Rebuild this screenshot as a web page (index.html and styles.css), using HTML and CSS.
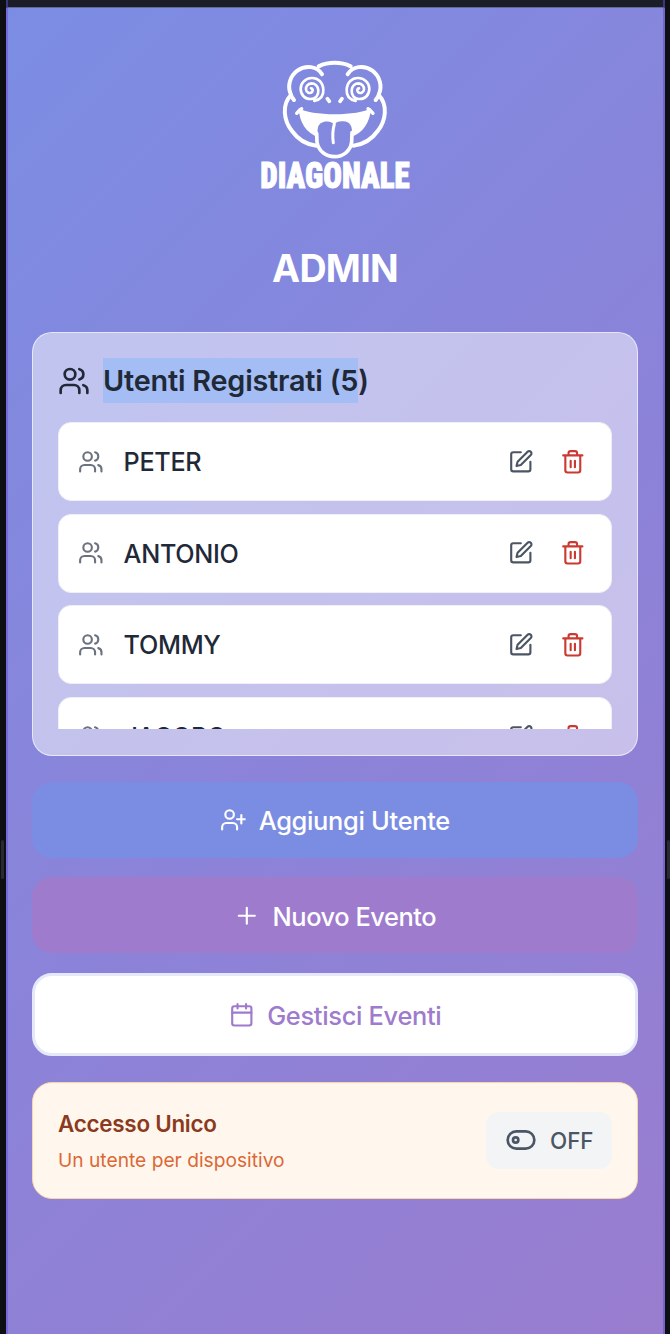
FILE: index.html
```
<!DOCTYPE html>
<html lang="it">
<head>
<meta charset="utf-8">
<title>Admin</title>
<link rel="stylesheet" href="styles.css">
</head>
<body>
<svg class="symbols" aria-hidden="true">
  <symbol id="users" viewBox="0 0 24 24"><path d="M16 21v-2a4 4 0 0 0-4-4H6a4 4 0 0 0-4 4v2"/><circle cx="9" cy="7" r="4"/><path d="M22 21v-2a4 4 0 0 0-3-3.87M16 3.13a4 4 0 0 1 0 7.75"/></symbol>
  <symbol id="edit" viewBox="0 0 24 24"><path d="M12 3H5a2 2 0 0 0-2 2v14a2 2 0 0 0 2 2h14a2 2 0 0 0 2-2v-7"/><path d="M18.375 2.625a2.121 2.121 0 1 1 3 3L12 15l-4 1 1-4Z"/></symbol>
  <symbol id="trash" viewBox="0 0 24 24"><path d="M3 6h18M19 6v14a2 2 0 0 1-2 2H7a2 2 0 0 1-2-2V6M8 6V4a2 2 0 0 1 2-2h4a2 2 0 0 1 2 2v2M10 11v6M14 11v6"/></symbol>
  <symbol id="user-plus" viewBox="0 0 24 24"><path d="M16 21v-2a4 4 0 0 0-4-4H6a4 4 0 0 0-4 4v2"/><circle cx="9" cy="7" r="4"/><path d="M20 7.5v8M24 11.5h-8"/></symbol>
  <symbol id="plus" viewBox="0 0 24 24"><path d="M4.500 12h15M12 4.500v15"/></symbol>
  <symbol id="calendar" viewBox="0 0 24 24"><path d="M8 2v4M16 2v4M3 10h18"/><rect x="3" y="4" width="18" height="18" rx="2"/></symbol>
  <symbol id="toggle" viewBox="0 0 24 24"><rect x="2" y="5.5" width="20" height="13" rx="6.5"/><circle cx="8" cy="12" r="2"/></symbol>
</svg>
<div class="window">
  <div class="topbar"></div>
  <main class="screen">
    <svg class="logo" viewBox="0 0 510 450">
      <g fill="none" stroke="#fff" stroke-width="12" stroke-linecap="round" stroke-linejoin="round">
        <path d="M206 49C235 35 273 35 302 49"/>
        <path d="M216 73C202 48 167 44 142 62C119 79 112 108 122 132C124 140 128 146 132 150"/>
        <path d="M293 73C307 48 342 44 367 62C390 79 397 108 387 132C385 140 381 146 377 150"/>
        <path d="M122 136C96 164 100 210 126 243C145 270 172 284 199 287"/>
        <path d="M387 136C413 164 409 210 383 243C364 270 337 284 310 287"/>
        <path d="M200 250L201 276C206 306 230 320 254 320C279 320 301 304 305 276L306 248" stroke-width="11"/>
        <path id="spiral" stroke-width="8" d="M193 153C213 149 221 136 220 119C219 97 204 83 185 84C166 85 152 99 152 116C152 135 165 147 181 147C197 147 206 136 205 121C204 108 195 100 184 100C174 101 167 109 168 118C169 128 180 132 186 126C190 121 188 115 183 115"/>
        <use href="#spiral" transform="translate(510 0) scale(-1 1)"/>
        <path stroke-width="10" d="M140 190Q147 182 155 176M369 190Q362 182 354 176"/>
        <path d="M232 146L238 154M276 146L270 154" stroke-width="11"/>
      </g>
      <path fill="#fff" d="M146 174C180 199 328 199 363 174C361 217 337 250 305 260C310 227 299 215 280 214C265 213 256 218 253 225C248 212 213 208 205 229C202 237 202 248 204 261C169 249 148 218 146 174Z"/>
      <path d="M253 222C248 240 247 258 250 278" fill="none" stroke="#fff" stroke-width="9" stroke-linecap="round"/>
      <text class="logo-text" x="31" y="413" textLength="448" lengthAdjust="spacingAndGlyphs">DIAGONALE</text>
    </svg>
    <h1>ADMIN</h1>
    <section class="users">
      <h2><svg class="icon i-lg"><use href="#users"/></svg><span class="t-title"><span class="selected">Utenti Registrati (5</span>)</span></h2>
      <div class="list">
        <div class="row"><svg class="icon muted"><use href="#users"/></svg><span class="name">PETER</span><svg class="icon edit"><use href="#edit"/></svg><svg class="icon trash"><use href="#trash"/></svg></div>
        <div class="row"><svg class="icon muted"><use href="#users"/></svg><span class="name">ANTONIO</span><svg class="icon edit"><use href="#edit"/></svg><svg class="icon trash"><use href="#trash"/></svg></div>
        <div class="row"><svg class="icon muted"><use href="#users"/></svg><span class="name">TOMMY</span><svg class="icon edit"><use href="#edit"/></svg><svg class="icon trash"><use href="#trash"/></svg></div>
        <div class="row"><svg class="icon muted"><use href="#users"/></svg><span class="name">JACOPO</span><svg class="icon edit"><use href="#edit"/></svg><svg class="icon trash"><use href="#trash"/></svg></div>
      </div>
    </section>
    <div class="actions">
      <div class="btn blue"><svg class="icon"><use href="#user-plus"/></svg><span>Aggiungi Utente</span></div>
      <div class="btn purple"><svg class="icon"><use href="#plus"/></svg><span>Nuovo Evento</span></div>
      <div class="btn white"><svg class="icon"><use href="#calendar"/></svg><span>Gestisci Eventi</span></div>
    </div>
    <section class="access">
      <div class="access-text"><h3>Accesso Unico</h3><p>Un utente per dispositivo</p></div>
      <div class="switch"><svg class="icon i-lg"><use href="#toggle"/></svg><span>OFF</span></div>
    </section>
  </main>
  <i class="grip left"></i><i class="grip right"></i>
</div>
</body>
</html>
```
FILE: styles.css
```
* { box-sizing: border-box; }
body { margin: 0; font-family: Inter, "Liberation Sans", sans-serif; }
h1, h2, h3, p { margin: 0; }
.symbols { position: absolute; width: 0; height: 0; }
.window { position: relative; height: 1334px; padding: 0 5px 0 6px; background: #0e0f13; overflow: hidden; }
.topbar { height: 8px; background: #1b1e26; border-bottom: 1px solid #62699a; border-left: 2px solid #3c3580; border-right: 2px solid #3c3580; }
.screen { height: 1326px; padding: 42px 25px 0 24px; display: flex; flex-direction: column; background: linear-gradient(135deg, #7b8de3 0%, #8b83d9 52%, #997dcf 100%); border: solid #7569dc; border-width: 0 2px; border-right-color: #7466c8; }
.logo { width: 170px; height: 150px; margin-left: 218px; flex: none; overflow: visible; }
.logo-text { font: 900 110px Roboto, sans-serif; font-stretch: 75%; fill: #fff; stroke: #fff; stroke-width: 3; }
h1 { height: 48px; margin-top: 45px; line-height: 48px; text-align: center; color: #fff; font-size: 37.6px; font-weight: 700; letter-spacing: -.7px; }
.icon { width: 25.6px; height: 25.6px; fill: none; stroke: currentColor; stroke-width: 2; stroke-linecap: round; stroke-linejoin: round; flex: none; }
.i-lg { width: 32px; height: 32px; }
.users { height: 424px; margin-top: 39px; padding: 25px; border: 1px solid rgba(255,255,255,.6); border-radius: 20px; background: rgba(255,255,255,.5); flex: none; }
h2 { display: flex; align-items: center; height: 45px; gap: 13px; color: #1f2937; font-size: 28.8px; font-weight: 600; line-height: 45px; letter-spacing: -.2px; white-space: nowrap; }
.selected { display: inline-block; background: #a4bdf4; }
.list { height: 307px; margin-top: 19px; overflow: hidden; display: flex; flex-direction: column; gap: 12.8px; }
.row { height: 78.9px; padding: 0 25px 0 19px; flex: none; display: flex; align-items: center; background: #fff; border: 1px solid #eef0f4; border-radius: 13px; }
.muted { color: #6b7280; }
.name { flex: 1; margin-left: 20px; padding-top: 1px; color: #1f2937; font-size: 25.2px; font-weight: 450; letter-spacing: -.3px; }
.edit { color: #4b5563; }
.trash { margin-left: 26.5px; color: #cb3a31; }
.actions { display: flex; flex-direction: column; gap: 19.7px; margin-top: 25.6px; }
.btn { height: 76px; display: flex; align-items: center; justify-content: center; gap: 13px; border-radius: 20px; color: #fff; font-size: 25.4px; font-weight: 470; letter-spacing: -.3px; }
.btn span { padding-top: 2px; }
.blue { background: #7b8de2; }
.purple { background: #9e7bcc; letter-spacing: -.45px; }
.purple .icon { margin-top: 2px; }
.white { height: 83px; background: #fff; color: #9e7bcc; border: 3px solid #e5e8f8; }
.access { height: 117px; margin-top: 26px; padding: 0 25px; display: flex; align-items: center; justify-content: space-between; background: #fff7ed; border: 1px solid #f9d5a9; border-radius: 20px; flex: none; }
.access-text { padding-top: 4px; }
h3 { line-height: 36px; color: #8b3a20; font-size: 22.4px; font-weight: 600; letter-spacing: -.25px; }
p { line-height: 36px; color: #dc6837; font-size: 19.2px; }
.switch { width: 126px; height: 57px; padding-left: 19px; display: flex; align-items: center; gap: 13px; border-radius: 13px; background: #f2f4f6; color: #4b5563; font-size: 22.4px; font-weight: 480; }
.grip { position: absolute; top: 840px; width: 3px; height: 39px; border-radius: 2px; background: #292a34; }
.left { left: 1px; }
.right { right: 0; }
```
